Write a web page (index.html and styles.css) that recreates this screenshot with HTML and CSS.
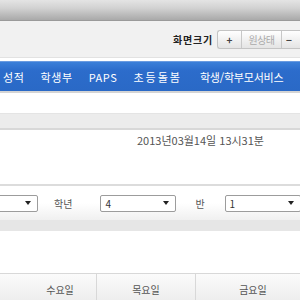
FILE: index.html
```html
<!DOCTYPE html>
<html lang="ko">
<head>
    <meta charset="UTF-8">
    <title>학사관리</title>
    <link rel="stylesheet" href="styles.css">
</head>
<body>
    <div class="top-bar"></div>

    <div class="header">
        <span class="size-label">화면크기</span>
        <div class="size-buttons">
            <span class="size-btn plus">+</span>
            <span class="size-btn reset">원상태</span>
            <span class="size-btn minus">−</span>
        </div>
    </div>

    <div class="nav">
        <span class="nav-item first">성적</span>
        <span class="nav-item">학생부</span>
        <span class="nav-item">PAPS</span>
        <span class="nav-item wide">초등돌봄</span>
        <span class="nav-item last">학생/학부모서비스</span>
    </div>

    <div class="sub-band"></div>

    <div class="date-row">2013년03월14일 13시31분</div>

    <div class="filter-box">
        <div class="select first-select"><span></span><i class="arrow"></i></div>
        <span class="filter-label">학년</span>
        <div class="select grade-select"><span>4</span><i class="arrow"></i></div>
        <span class="filter-label class-label">반</span>
        <div class="select class-select"><span>1</span><i class="arrow"></i></div>
    </div>

    <div class="week-table">
        <div class="day-cell">수요일</div>
        <div class="day-cell">목요일</div>
        <div class="day-cell">금요일</div>
    </div>
</body>
</html>
```

FILE: styles.css
```css
body {
    margin: 0;
    width: 300px;
    height: 300px;
    overflow: hidden;
    background: #ffffff;
    font-family: "Noto Sans CJK KR", "Liberation Sans", sans-serif;
    font-size: 11px;
    color: #333;
}
.top-bar {
    height: 20px;
    background: linear-gradient(#e4e4e4, #d2d2d2 40%, #a9a9a9);
    border-bottom: 1px solid #9a9a9a;
}
.header {
    height: 36px;
    background: #f1f1f1;
    display: flex;
    align-items: center;
    justify-content: flex-end;
    border-bottom: 1px solid #e2e2e2;
    overflow: hidden;
}
.size-label {
    font-weight: bold;
    font-size: 10px;
    color: #222;
    margin-right: 4px;
    letter-spacing: 0.8px;
}
.size-buttons {
    display: flex;
    flex-shrink: 0;
    height: 17px;
    border: 1px solid #c4c4c4;
    border-right: none;
    border-radius: 3px 0 0 3px;
    background: linear-gradient(#ffffff, #e4e4e4);
    margin-right: -20px;
}
.size-btn {
    display: flex;
    align-items: center;
    justify-content: center;
    font-size: 10px;
    color: #999;
    border-right: 1px solid #c8c8c8;
}
.size-btn.plus {
    width: 23px;
    color: #444;
    font-weight: bold;
}
.size-btn.reset {
    width: 39px;
    color: #aaa;
    letter-spacing: -0.5px;
}
.size-btn.minus {
    width: 34px;
    color: #444;
    font-weight: bold;
    justify-content: flex-start;
    padding-left: 4px;
    border-right: none;
}
.nav {
    margin-top: 3px;
    height: 29px;
    background: linear-gradient(#3b7fd8, #2c6ccb 30%, #2a69c6);
    border-top: 1px solid #6a9be0;
    display: flex;
    align-items: center;
    border-bottom: 2px solid #d4d4d4;
    white-space: nowrap;
}
.nav-item {
    color: #ffffff;
    font-size: 11px;
    margin-left: 16px;
    letter-spacing: 0.6px;
}
.nav-item.first {
    margin-left: 3px;
}
.nav-item.wide {
    letter-spacing: 2px;
}
.nav-item.last {
    margin-left: 18px;
    letter-spacing: -0.2px;
}
.sub-band {
    margin-top: 20px;
    height: 14px;
    background: #ececec;
    border-top: 1px solid #e4e4e4;
    border-bottom: 2px solid #d8d8d8;
}
.date-row {
    padding-left: 137px;
    margin-top: 2px;
    height: 16px;
    line-height: 16px;
    font-family: "Liberation Sans Narrow", "Noto Sans CJK KR", sans-serif;
    font-size: 11px;
    color: #555;
    letter-spacing: 0;
    white-space: nowrap;
}
.filter-box {
    margin-top: 36px;
    height: 34px;
    border-top: 2px solid #dcdcdc;
    background: linear-gradient(#ffffff 50%, #f0f0f0);
    border-bottom: 11px solid #e6e6e6;
    display: flex;
    align-items: center;
    overflow: hidden;
    white-space: nowrap;
}
.select {
    flex-shrink: 0;
    height: 17px;
    border: 1px solid #9c9c9c;
    border-radius: 2px;
    background: #fff;
    display: flex;
    align-items: center;
    justify-content: space-between;
    box-sizing: border-box;
    font-size: 10px;
    color: #333;
    padding: 0 6px 0 4px;
}
.first-select {
    width: 40px;
    margin-left: -2px;
}
.grade-select {
    width: 76px;
}
.class-select {
    width: 76px;
}
.arrow {
    width: 0;
    height: 0;
    border-left: 3px solid transparent;
    border-right: 3px solid transparent;
    border-top: 4px solid #222;
}
.filter-label {
    flex-shrink: 0;
    margin: 0 28px 0 16px;
    color: #555;
    font-size: 10px;
}
.class-label {
    margin: 0 20px 0 19px;
}
.week-table {
    margin-top: 42px;
    height: 30px;
    display: flex;
    border-top: 1px solid #d8d8d8;
    background: linear-gradient(#fbfbfb, #ececec);
}
.day-cell {
    display: flex;
    align-items: center;
    justify-content: center;
    font-size: 10px;
    color: #555;
    border-right: 1px solid #d8d8d8;
}
.day-cell:nth-child(1) {
    width: 100px;
    padding-left: 24px;
    box-sizing: border-box;
}
.day-cell:nth-child(2) {
    width: 102px;
}
.day-cell:nth-child(3) {
    width: 98px;
    padding-left: 10px;
    border-right: none;
}
```
